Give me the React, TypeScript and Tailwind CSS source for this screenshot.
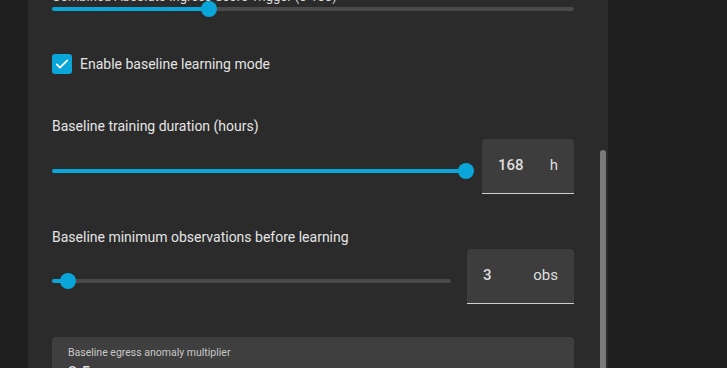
import React from "react";

function Slider({ pct }: { pct: number }) {
  return (
    <div className="relative h-4 flex-1 flex items-center">
      <div className="h-1 w-full rounded-full bg-[#4a4a4a]" />
      <div
        className="absolute left-0 h-1 rounded-full bg-[#0aa6da]"
        style={{ width: `${pct}%` }}
      />
      <div
        className="absolute h-4 w-4 rounded-full bg-[#0aa6da]"
        style={{ left: `calc(${pct}% - 8px)` }}
      />
    </div>
  );
}

function NumBox({ value, unit, w }: { value: string; unit: string; w: string }) {
  return (
    <div
      className={`${w} h-[55px] shrink-0 rounded-t-[4px] bg-[#3d3d3d] border-b border-[#cfcfcf] flex items-center justify-between px-4 pb-[2px] text-[15px] text-[#dedede]`}
    >
      <span className="font-medium">{value}</span>
      <span>{unit}</span>
    </div>
  );
}

export default function App() {
  return (
    <div
      className="w-[727px] h-[368px] overflow-hidden bg-[#1f1f1f] flex"
      style={{ fontFamily: "Roboto, 'Noto Sans', sans-serif" }}
    >
      <div className="w-[28px] shrink-0 bg-[#1e1e1e]" />
      <div className="relative w-[580px] shrink-0 bg-[#2b2b2b]">
        <div className="pl-6 pr-[34px] mt-[-20px] flex flex-col">
          <div className="h-5 text-[13px] leading-5 text-[#dcdcdc] whitespace-nowrap translate-y-[7px]">
            Combined Absolute Ingress Score Trigger (0-100)
          </div>
          <div className="h-[18px] flex items-center">
            <Slider pct={30} />
          </div>
          <div className="mt-[36px] flex items-center gap-2 h-5">
            <div className="h-5 w-5 rounded-[3px] bg-[#0aa6da] flex items-center justify-center">
              <svg width="16" height="16" viewBox="0 0 24 24" fill="none">
                <path d="M4 12.5l5 5L20 6.5" stroke="white" strokeWidth="2.6" strokeLinecap="round" strokeLinejoin="round" />
              </svg>
            </div>
            <span className="text-[14px] text-[#e4e4e4]">Enable baseline learning mode</span>
          </div>
          <div className="mt-[42px] h-5 leading-5 text-[14px] text-[#e4e4e4]">
            Baseline training duration (hours)
          </div>
          <div className="mt-[3px] flex items-start gap-4">
            <div className="mt-6 flex-1 flex">
              <Slider pct={100} />
            </div>
            <NumBox value="168" unit="h" w="w-[92px]" />
          </div>
          <div className="mt-[33px] h-5 leading-5 text-[14px] text-[#e4e4e4]">
            Baseline minimum observations before learning
          </div>
          <div className="mt-[2px] flex items-start gap-4">
            <div className="mt-6 flex-1 flex">
              <Slider pct={4} />
            </div>
            <NumBox value="3" unit="obs" w="w-[107px]" />
          </div>
          <div className="mt-[33px] h-[56px] rounded-[4px] bg-[#3f3f3f] px-4 pt-[10px]">
            <div className="text-[10.5px] leading-3 text-[#c8c8c8]">Baseline egress anomaly multiplier</div>
            <div className="text-[16px] leading-5 text-[#e4e4e4] mt-[4px]">2.5</div>
          </div>
        </div>
        <div className="absolute left-[572px] top-[150px] w-[6px] h-[240px] rounded-t-full bg-[#7a7a7a]" />
      </div>
      <div className="flex-1 bg-[#1f1f1f]" />
    </div>
  );
}
